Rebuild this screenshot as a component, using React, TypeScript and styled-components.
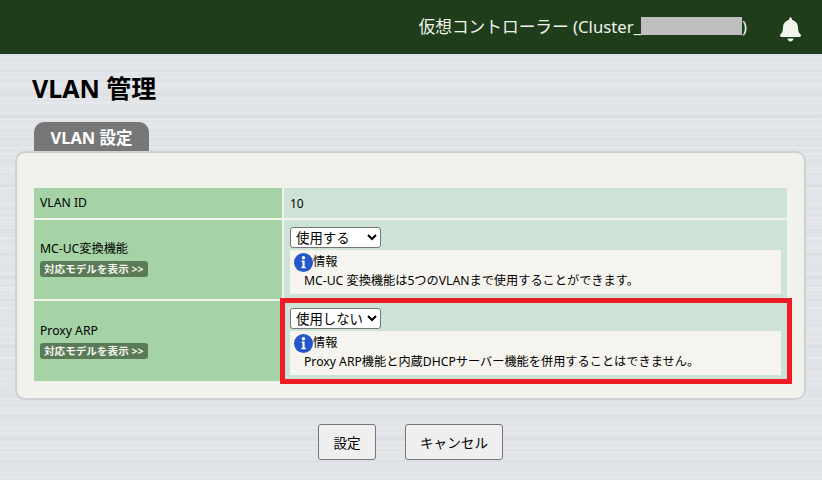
import React from 'react';
import styled, { createGlobalStyle } from 'styled-components';
import { FaBell } from 'react-icons/fa';

const FONT = '"Noto Sans", "Noto Sans CJK JP", sans-serif';

const GlobalStyle = createGlobalStyle`
  html, body {
    margin: 0;
    height: 100%;
    overflow: hidden;
  }
  body {
    font-family: ${FONT};
    color: #111;
    background-color: #e1e4e8;
    background-image:
      repeating-linear-gradient(180deg, rgba(255, 255, 255, 0.16) 0 1px, transparent 1px 7px),
      repeating-linear-gradient(180deg, rgba(120, 125, 135, 0.035) 0 1px, transparent 1px 5px),
      repeating-linear-gradient(180deg, rgba(255, 255, 255, 0.12) 0 2px, transparent 2px 17px),
      repeating-linear-gradient(180deg, rgba(120, 125, 135, 0.05) 0 3px, transparent 3px 23px),
      repeating-linear-gradient(180deg, rgba(255, 255, 255, 0.1) 0 5px, transparent 5px 41px);
  }
`;

const Header = styled.header`
  height: 54px;
  background: #1f3d1a;
  display: flex;
  align-items: center;
  justify-content: flex-end;
  padding: 0 21px 0 0;
  gap: 33px;
  color: #f2f3ec;
`;

const HeaderTitle = styled.div`
  font-size: 16.7px;
  display: flex;
  align-items: center;
  position: relative;
  top: -1px;
`;

const Redacted = styled.span`
  display: inline-block;
  width: 101px;
  height: 18px;
  background: #bfbfbf;
`;

const Bell = styled(FaBell)`
  width: 21px;
  height: 25px;
  margin-top: 4px;
  color: #f2f3ec;
`;

const Main = styled.main`
  padding: 19px 15px 0 15px;
  width: 791px;
`;

const Title = styled.h1`
  margin: 0 0 0 17px;
  font-size: 25px;
  line-height: 30px;
  font-weight: 700;
  color: #000;
`;

const Tab = styled.div`
  margin: 19px 0 0 19px;
  width: 115px;
  height: 29px;
  box-sizing: border-box;
  background: #777;
  border-radius: 10px 10px 0 0;
  color: #fff;
  font-size: 16.5px;
  font-weight: 700;
  line-height: 32px;
  text-align: center;
`;

const Panel = styled.section`
  box-sizing: border-box;
  height: 249px;
  background: #f1f2eb;
  border: 2px solid #cfd0d4;
  border-radius: 10px;
  padding: 35px 17px 0 17px;
`;

const Grid = styled.div`
  display: grid;
  grid-template-columns: 248px 503px;
  grid-template-rows: 30px 79px 80px;
  gap: 2px;
  position: relative;
  font-size: 12px;
  color: #000;
`;

const LabelCell = styled.div`
  background: #a5d3a6;
  padding: 0 6px 2px 6px;
  display: flex;
  flex-direction: column;
  justify-content: center;
  align-items: flex-start;
  gap: 4px;
`;

const LabelText = styled.div`
  font-size: 12.2px;
  line-height: 17px;
`;

const ModelBadge = styled.span`
  background: #5a7a58;
  color: #f4f6ee;
  border-radius: 3px;
  font-size: 10.6px;
  font-weight: 700;
  line-height: 16px;
  padding: 0 4px;
  white-space: nowrap;
`;

const ValueCell = styled.div<{ $plain?: boolean }>`
  background: #cde3d6;
  padding: ${p => (p.$plain ? '0 6px' : '7px 6px 0 6px')};
  display: flex;
  flex-direction: column;
  justify-content: ${p => (p.$plain ? 'center' : 'flex-start')};
  align-items: flex-start;
`;

const Select = styled.select`
  width: 91px;
  height: 21px;
  box-sizing: border-box;
  font-family: ${FONT};
  font-size: 13.4px;
  background: #fff;
  border: 1px solid #767676;
  border-radius: 3px;
  color: #000;
  padding: 0 0 0 1px;
  margin: 0;
`;

const InfoBox = styled.div`
  align-self: stretch;
  background: #f5f4ee;
  margin-top: 2px;
  height: 44px;
  padding: 2px 4px 0 4px;
  box-sizing: border-box;
`;

const InfoHead = styled.div`
  display: flex;
  align-items: center;
  height: 20px;
  line-height: 16px;
  font-size: 12.2px;
`;

const InfoText = styled.div`
  padding-left: 10px;
  font-size: 12.2px;
  line-height: 18px;
  white-space: nowrap;
`;

const Highlight = styled.div`
  position: absolute;
  left: 246px;
  top: 110px;
  width: 512px;
  height: 86px;
  box-sizing: border-box;
  border: 5px solid #ee1c25;
  pointer-events: none;
`;

const Actions = styled.div`
  display: flex;
  justify-content: center;
  gap: 29px;
  margin-top: 24px;
`;

const Button = styled.button`
  height: 36px;
  box-sizing: border-box;
  padding: 0 14px;
  min-width: 58px;
  background: #efefef;
  border: 1px solid #767676;
  border-radius: 3px;
  font-family: ${FONT};
  font-size: 13.6px;
  color: #000;
`;

const InfoIcon = () => (
  <svg width="19" height="19" viewBox="0 0 19 19">
    <circle cx="9.5" cy="9.5" r="9.5" fill="#2457c9" />
    <circle cx="9.5" cy="4.8" r="1.7" fill="#fff" />
    <path d="M7.6 7.6h3v6.2h1.1v1.5H7.4v-1.5h1.1V9.1H7.6z" fill="#fff" />
  </svg>
);

const Info = ({ text }: { text: string }) => (
  <InfoBox>
    <InfoHead>
      <InfoIcon />
      情報
    </InfoHead>
    <InfoText>{text}</InfoText>
  </InfoBox>
);

export default function App() {
  return (
    <>
      <GlobalStyle />
      <Header>
        <HeaderTitle>
          仮想コントローラー (Cluster_<Redacted />)
        </HeaderTitle>
        <Bell />
      </Header>
      <Main>
        <Title>VLAN 管理</Title>
        <Tab>VLAN 設定</Tab>
        <Panel>
          <Grid>
            <LabelCell>
              <LabelText>VLAN ID</LabelText>
            </LabelCell>
            <ValueCell $plain>10</ValueCell>

            <LabelCell>
              <LabelText>MC-UC変換機能</LabelText>
              <ModelBadge>対応モデルを表示 &gt;&gt;</ModelBadge>
            </LabelCell>
            <ValueCell>
              <Select defaultValue="on">
                <option value="on">使用する</option>
                <option value="off">使用しない</option>
              </Select>
              <Info text="MC-UC 変換機能は5つのVLANまで使用することができます。" />
            </ValueCell>

            <LabelCell>
              <LabelText>Proxy ARP</LabelText>
              <ModelBadge>対応モデルを表示 &gt;&gt;</ModelBadge>
            </LabelCell>
            <ValueCell>
              <Select defaultValue="off">
                <option value="on">使用する</option>
                <option value="off">使用しない</option>
              </Select>
              <Info text="Proxy ARP機能と内蔵DHCPサーバー機能を併用することはできません。" />
            </ValueCell>
            <Highlight />
          </Grid>
        </Panel>
        <Actions>
          <Button>設定</Button>
          <Button>キャンセル</Button>
        </Actions>
      </Main>
    </>
  );
}
